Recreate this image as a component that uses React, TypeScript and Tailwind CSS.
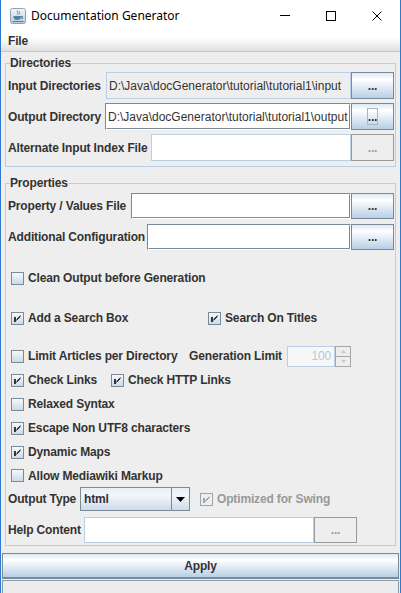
import React from "react";

function CheckIcon({ checked, disabled }: { checked?: boolean; disabled?: boolean }) {
  const stroke = disabled ? "#9aa5b1" : "#7a8a99";
  const mark = disabled ? "#9aa5b1" : "#333333";
  return (
    <svg width="13" height="13" viewBox="0 0 13 13" className="shrink-0">
      <defs>
        <linearGradient id="cbg" x1="0" y1="0" x2="0" y2="1">
          <stop offset="0" stopColor="#f7fafc" />
          <stop offset="1" stopColor="#c9d8e8" />
        </linearGradient>
      </defs>
      <rect x="0.5" y="0.5" width="12" height="12" fill={disabled ? "#eeeeee" : "url(#cbg)"} stroke={stroke} />
      {checked && (
        <>
          <rect x="3" y="5" width="2" height="5" fill={mark} />
          <path d="M9.5 3.5 L5.5 7.5 M9.5 4.5 L5.5 8.5" stroke={mark} strokeWidth="1" fill="none" />
        </>
      )}
    </svg>
  );
}

function Check({ label, checked, disabled }: { label: string; checked?: boolean; disabled?: boolean }) {
  return (
    <div className="flex items-center gap-[4px]">
      <CheckIcon checked={checked} disabled={disabled} />
      <span className={disabled ? "font-bold text-[#999999] whitespace-nowrap" : "font-bold whitespace-nowrap"}>{label}</span>
    </div>
  );
}

function DotsButton({ disabled, focus }: { disabled?: boolean; focus?: boolean }) {
  if (disabled) {
    return (
      <div className="w-[43px] h-full shrink-0 border border-[#9a9a9a] bg-[#eeeeee] flex items-center justify-center font-bold text-[#9a9a9a]">
        ...
      </div>
    );
  }
  return (
    <div className="w-[43px] h-full shrink-0 border border-[#7a8a99] bg-[linear-gradient(to_bottom,#dde8f3,#ffffff_25%,#b8cfe5)] flex items-center justify-center font-bold">
      {focus ? (
        <span className="w-[11px] h-[17px] border border-[#a3b8cc] flex items-center justify-center">...</span>
      ) : (
        "..."
      )}
    </div>
  );
}

function EditField({ text }: { text?: string }) {
  return (
    <div className="flex-1 min-w-0 h-full border border-t-[#7a8a99] border-l-[#7a8a99] border-b-white border-r-white">
      <div className="h-full border border-t-white border-l-white border-b-[#7a8a99] border-r-[#7a8a99] bg-white flex items-center pl-[1px] overflow-hidden whitespace-nowrap tracking-normal">
        {text}
      </div>
    </div>
  );
}

function LightField({ text, bg }: { text?: string; bg: "white" | "gray" }) {
  return (
    <div
      className={
        bg === "white"
          ? "flex-1 min-w-0 h-full border border-[#b8cfe5] bg-white flex items-center pl-[2px] overflow-hidden whitespace-nowrap tracking-normal"
          : "flex-1 min-w-0 h-full border border-[#b8cfe5] bg-[#eeeeee] flex items-center pl-[2px] overflow-hidden whitespace-nowrap tracking-normal"
      }
    >
      {text}
    </div>
  );
}

function JavaIcon() {
  return (
    <svg width="16" height="16" viewBox="0 0 16 16" className="shrink-0">
      <defs>
        <linearGradient id="jg" x1="0" y1="0" x2="0" y2="1">
          <stop offset="0" stopColor="#f4f7fa" />
          <stop offset="1" stopColor="#b9cadb" />
        </linearGradient>
      </defs>
      <rect x="0.5" y="0.5" width="15" height="15" rx="2" fill="url(#jg)" stroke="#8ea3b9" />
      <path d="M7.5 2.5 C6 4 9 4.8 7.5 6.8 M9.5 3 C8.5 4.3 10.5 4.8 9.5 6.3" stroke="#e76f00" fill="none" strokeWidth="1" />
      <path d="M3.5 8 h7.5 v1 c0 2 -1.6 3 -3.75 3 s-3.75 -1 -3.75 -3 z" fill="#5382a1" />
      <path d="M11 8.5 h1.5 v1.8 h-1.7" stroke="#5382a1" fill="none" />
      <path d="M2.5 13.5 h11" stroke="#5382a1" />
    </svg>
  );
}

export default function App() {
  return (
    <div className="w-[401px] h-[593px] overflow-hidden bg-[#eeeeee] border-x border-[#2f7ad1] flex flex-col font-['Liberation_Sans',Arial,sans-serif] text-[12px] leading-[14px] tracking-[-0.15px] text-[#333333]">
      {/* Title bar */}
      <div className="h-[31px] shrink-0 bg-white flex items-center">
        <div className="ml-[9px]">
          <JavaIcon />
        </div>
        <span className="ml-[5px] font-['Noto_Sans',sans-serif] text-[12px] tracking-normal text-black">Documentation Generator</span>
        <div className="ml-auto flex h-full">
          <div className="w-[46px] h-full flex items-center justify-center">
            <div className="w-[10px] h-[1px] bg-black" />
          </div>
          <div className="w-[46px] h-full flex items-center justify-center">
            <div className="w-[10px] h-[10px] border border-black" />
          </div>
          <div className="w-[46px] h-full flex items-center justify-center">
            <svg width="10" height="10" viewBox="0 0 10 10">
              <path d="M0.5 0.5 L9.5 9.5 M9.5 0.5 L0.5 9.5" stroke="#000" strokeWidth="1" />
            </svg>
          </div>
        </div>
      </div>

      {/* Menu bar */}
      <div className="h-[21px] shrink-0 bg-[linear-gradient(to_bottom,#ffffff,#ffffff_35%,#dfdfdf)] border-b border-[#c8c8c8] flex items-center pl-[7px]">
        <span className="font-bold">File</span>
      </div>

      {/* Directories */}
      <fieldset className="mx-[4px] mt-[4px] border border-[#b8cfe5]">
        <legend className="ml-[4px] font-bold">Directories</legend>
        <div className="flex flex-col gap-[4px] pl-[2px] pr-[1px] pt-[2px] pb-[5px]">
          <div className="h-[27px] flex items-stretch">
            <div className="w-[98px] shrink-0 flex items-center font-bold whitespace-nowrap">Input Directories</div>
            <LightField bg="gray" text="D:\Java\docGenerator\tutorial\tutorial1\input" />
            <DotsButton />
          </div>
          <div className="h-[27px] flex items-stretch">
            <div className="w-[97px] shrink-0 flex items-center font-bold whitespace-nowrap">Output Directory</div>
            <EditField text="D:\Java\docGenerator\tutorial\tutorial1\output" />
            <DotsButton focus />
          </div>
          <div className="h-[27px] flex items-stretch">
            <div className="w-[143px] shrink-0 flex items-center font-bold whitespace-nowrap">Alternate Input Index File</div>
            <LightField bg="white" />
            <DotsButton disabled />
          </div>
        </div>
      </fieldset>

      {/* Properties */}
      <fieldset className="mx-[4px] mt-[9px] border border-[#b8cfe5]">
        <legend className="ml-[4px] font-bold">Properties</legend>
        <div className="flex flex-col pl-[2px] pr-[1px] pt-[3px] pb-[2px]">
          <div className="h-[26px] flex items-stretch">
            <div className="w-[123px] shrink-0 flex items-center font-bold whitespace-nowrap">Property / Values File</div>
            <EditField />
            <DotsButton />
          </div>
          <div className="h-[26px] mt-[5px] flex items-stretch">
            <div className="w-[139px] shrink-0 flex items-center font-bold whitespace-nowrap">Additional Configuration</div>
            <EditField />
            <DotsButton />
          </div>

          <div className="h-[24px] mt-[16px] flex items-center pl-[3px]">
            <Check label="Clean Output before Generation" />
          </div>

          <div className="h-[24px] mt-[16px] flex items-center pl-[3px]">
            <div className="w-[197px] shrink-0">
              <Check label="Add a Search Box" checked />
            </div>
            <Check label="Search On Titles" checked />
          </div>

          <div className="h-[24px] mt-[14px] flex items-center pl-[3px]">
            <div className="w-[178px] shrink-0">
              <Check label="Limit Articles per Directory" />
            </div>
            <span className="font-bold w-[98px] shrink-0 whitespace-nowrap">Generation Limit</span>
            <div className="h-[21px] flex">
              <div className="w-[48px] h-full border border-[#b8cfe5] bg-[#f7f7f7] flex items-center justify-end pr-[3px] text-[#b8c8d8]">
                100
              </div>
              <div className="w-[16px] h-full flex flex-col">
                <div className="flex-1 border border-[#a8a8a8] border-b-0 flex items-center justify-center">
                  <svg width="5" height="3" viewBox="0 0 5 3">
                    <path d="M0 3 L2.5 0 L5 3 Z" fill="#c0ccd8" />
                  </svg>
                </div>
                <div className="flex-1 border border-[#a8a8a8] flex items-center justify-center">
                  <svg width="5" height="3" viewBox="0 0 5 3">
                    <path d="M0 0 L2.5 3 L5 0 Z" fill="#c0ccd8" />
                  </svg>
                </div>
              </div>
            </div>
          </div>

          <div className="h-[24px] flex items-center pl-[3px]">
            <div className="w-[100px] shrink-0">
              <Check label="Check Links" checked />
            </div>
            <Check label="Check HTTP Links" checked />
          </div>
          <div className="h-[24px] flex items-center pl-[3px]">
            <Check label="Relaxed Syntax" />
          </div>
          <div className="h-[24px] flex items-center pl-[3px]">
            <Check label="Escape Non UTF8 characters" checked />
          </div>
          <div className="h-[24px] flex items-center pl-[3px]">
            <Check label="Dynamic Maps" checked />
          </div>
          <div className="h-[23px] flex items-center pl-[3px]">
            <Check label="Allow Mediawiki Markup" />
          </div>

          <div className="h-[24px] flex items-center">
            <div className="w-[72px] shrink-0 font-bold whitespace-nowrap">Output Type</div>
            <div className="w-[110px] h-full border border-[#7a8a99] bg-[linear-gradient(to_bottom,#e6eef6,#f4f7fa_30%,#cddbea)] flex">
              <div className="flex-1 flex items-center pl-[3px] font-bold">html</div>
              <div className="w-[18px] border-l border-[#7a8a99] flex items-center justify-center">
                <svg width="9" height="5" viewBox="0 0 9 5">
                  <path d="M0 0 L9 0 L4.5 5 Z" fill="#000" />
                </svg>
              </div>
            </div>
            <div className="ml-[10px]">
              <Check label="Optimized for Swing" checked disabled />
            </div>
          </div>

          <div className="h-[26px] mt-[6px] flex items-stretch">
            <div className="w-[76px] shrink-0 flex items-center font-bold whitespace-nowrap">Help Content</div>
            <div className="w-[230px] shrink-0 flex">
              <LightField bg="white" />
            </div>
            <DotsButton disabled />
          </div>
        </div>
      </fieldset>

      {/* Apply */}
      <div className="mx-[1px] mt-[7px] h-[26px] shrink-0 border border-[#7a8a99] border-b-2 bg-[linear-gradient(to_bottom,#dde8f3,#ffffff_25%,#b8cfe5)] flex items-center justify-center font-bold">
        Apply
      </div>
      <div className="mx-[1px] mt-[1px] h-[16px] shrink-0 border border-[#8a9aab] bg-[#ececec]" />
    </div>
  );
}
